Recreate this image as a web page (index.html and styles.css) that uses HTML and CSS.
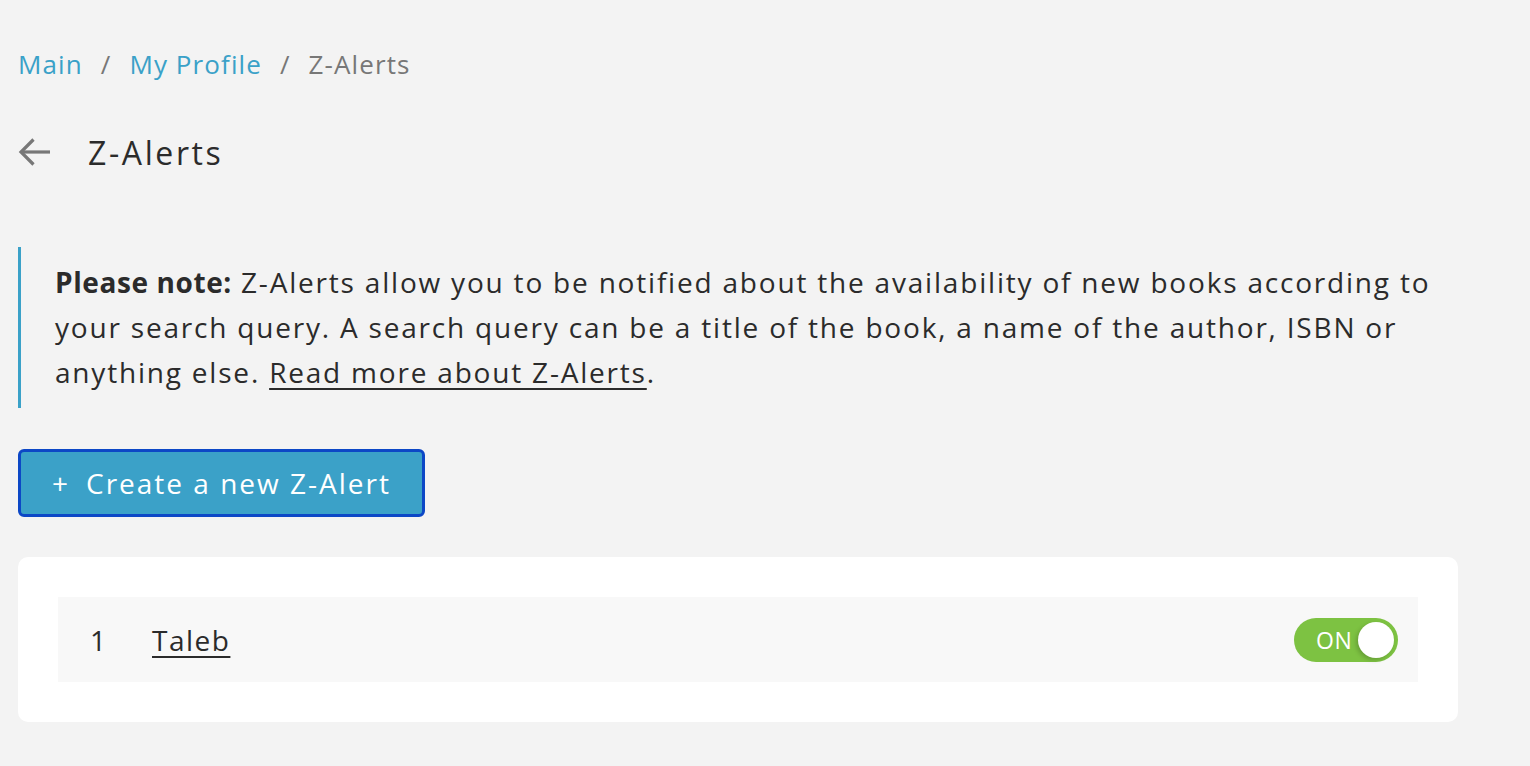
FILE: index.html
```html
<!DOCTYPE html>
<html lang="en">
<head>
<meta charset="utf-8">
<title>Z-Alerts</title>
<link rel="stylesheet" href="styles.css">
</head>
<body>
<div class="page">
  <nav class="breadcrumb">
    <a href="#" class="crumb-link">Main</a>
    <span class="sep">/</span>
    <a href="#" class="crumb-link">My Profile</a>
    <span class="sep">/</span>
    <span class="crumb-current">Z-Alerts</span>
  </nav>

  <div class="title-row">
    <a href="#" class="back" aria-label="Back">
      <svg width="32" height="30" viewBox="0 0 32 30" fill="none" stroke="#777" stroke-width="3.2" stroke-linecap="butt" stroke-linejoin="miter">
        <path d="M32 15H3"/>
        <path d="M15.5 2.5L3 15l12.5 12.5"/>
      </svg>
    </a>
    <h1 class="title">Z-Alerts</h1>
  </div>

  <div class="note">
    <p><b>Please note:</b> Z-Alerts allow you to be notified about the availability of new books according to your search query. A search query can be a title of the book, a name of the author, ISBN or anything else. <a href="#" class="note-link">Read more about Z-Alerts</a>.</p>
  </div>

  <button class="create-btn" type="button"><span class="plus">+</span>Create a new Z-Alert</button>

  <div class="card">
    <div class="alert-row">
      <span class="num">1</span>
      <a href="#" class="alert-name">Taleb</a>
      <span class="toggle"><span class="toggle-label">ON</span><span class="knob"></span></span>
    </div>
  </div>
</div>
</body>
</html>
```

FILE: styles.css
```css
html, body {
  margin: 0;
  padding: 0;
  background: #f3f3f3;
}
body {
  font-family: "Open Sans", "Liberation Sans", sans-serif;
  color: #2b2b2b;
}
.page {
  padding: 44px 72px 40px 18px;
  display: flex;
  flex-direction: column;
  align-items: flex-start;
}
.breadcrumb {
  display: flex;
  align-items: baseline;
  gap: 18px;
  font-size: 26px;
  line-height: 40px;
  letter-spacing: 1.1px;
}
.crumb-link {
  color: #3aa1c8;
  text-decoration: none;
}
.sep {
  color: #777;
}
.crumb-current {
  color: #777;
}
.title-row {
  margin-top: 48px;
  display: flex;
  align-items: center;
  gap: 38px;
  height: 40px;
}
.back {
  display: flex;
  align-items: center;
}
.title {
  margin: 0;
  font-size: 32px;
  font-weight: 400;
  letter-spacing: 2.6px;
  color: #2b2b2b;
}
.note {
  margin-top: 75px;
  align-self: stretch;
  border-left: 3px solid #3aa1c8;
  padding: 13px 0 13px 34px;
}
.note p {
  margin: 0;
  font-size: 28px;
  line-height: 45px;
  letter-spacing: 1.8px;
  color: #2b2b2b;
}
.note b {
  font-weight: 700;
  letter-spacing: 0.6px;
}
.note-link {
  color: #2b2b2b;
  text-decoration: underline;
  text-decoration-thickness: 2px;
  text-underline-offset: 5px;
}
.create-btn {
  margin-top: 41px;
  height: 68px;
  width: 407px;
  background: #3ba1c8;
  border: 3px solid #0c47c6;
  border-radius: 6px;
  color: #fff;
  font-family: inherit;
  font-size: 28px;
  letter-spacing: 2px;
  display: flex;
  align-items: center;
  justify-content: center;
  gap: 16px;
  padding: 0;
}
.plus {
  font-size: 28px;
}
.card {
  margin-top: 40px;
  align-self: stretch;
  background: #fff;
  border-radius: 10px;
  padding: 40px;
}
.alert-row {
  background: #f8f8f8;
  height: 85px;
  display: flex;
  align-items: center;
  padding: 0 20px 0 32px;
  font-size: 28px;
  letter-spacing: 1.5px;
}
.num {
  width: 62px;
  color: #2b2b2b;
}
.alert-name {
  color: #2b2b2b;
  text-decoration: underline;
  text-decoration-thickness: 2px;
  text-underline-offset: 5px;
}
.toggle {
  margin-left: auto;
  width: 104px;
  height: 44px;
  border-radius: 22px;
  background: #7dc242;
  display: flex;
  align-items: center;
  justify-content: space-between;
  padding: 0 4px 0 22px;
  box-sizing: border-box;
}
.toggle-label {
  color: #fff;
  font-size: 23px;
  letter-spacing: 0.5px;
}
.knob {
  width: 36px;
  height: 36px;
  border-radius: 50%;
  background: #fff;
  box-shadow: -2px 2px 4px rgba(0,0,0,0.18);
}
```
